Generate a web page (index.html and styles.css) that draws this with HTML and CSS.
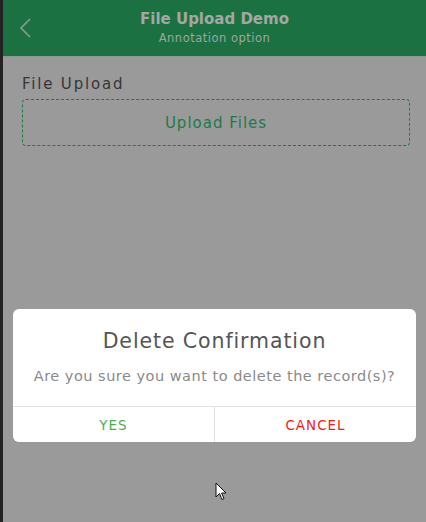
FILE: index.html
```html
<!DOCTYPE html>
<html>
<head>
<meta charset="utf-8">
<link rel="stylesheet" href="styles.css">
</head>
<body>
<div class="screen">
  <div class="strip"></div>
  <div class="app">
    <header class="topbar">
      <button class="back" aria-label="Back">
        <svg width="14" height="22" viewBox="0 0 14 22"><path d="M12 2 L3 11 L12 20" fill="none" stroke="#8f9c93" stroke-width="1.6"/></svg>
      </button>
      <div class="titles">
        <div class="title">File Upload Demo</div>
        <div class="subtitle">Annotation option</div>
      </div>
      <div class="spacer"></div>
    </header>
    <main class="content">
      <div class="label">File Upload</div>
      <div class="dropzone">Upload Files</div>
    </main>
  </div>
  <div class="dialog">
    <div class="dialog-body">
      <div class="dialog-title">Delete Confirmation</div>
      <div class="dialog-msg">Are you sure you want to delete the record(s)?</div>
    </div>
    <div class="dialog-actions">
      <button class="btn yes">YES</button>
      <button class="btn cancel">CANCEL</button>
    </div>
  </div>
  <svg class="cursor" width="13" height="20" viewBox="0 0 13 20"><path d="M1 1 L1 15 L4.5 11.5 L7 17.5 L9 16.6 L6.6 11 L11 11 Z" fill="#fff" stroke="#111" stroke-width="1"/></svg>
</div>
</body>
</html>
```
FILE: styles.css
```css
html, body {
  margin: 0;
  padding: 0;
  background: #9a9a9a;
}
.screen {
  position: relative;
  display: flex;
  width: 426px;
  height: 522px;
  font-family: "DejaVu Sans", sans-serif;
}
.strip {
  width: 3px;
  background: #232323;
  flex: none;
}
.app {
  flex: 1;
  display: flex;
  flex-direction: column;
}
.topbar {
  height: 57px;
  background: #1b7142;
  display: grid;
  grid-template-columns: 40px 1fr 40px;
  align-items: center;
  border-bottom: 1px solid #8a9a90;
  box-sizing: border-box;
}
.back {
  background: none;
  border: none;
  padding: 0;
  margin-left: 15px;
  display: flex;
  width: 14px;
}
.titles {
  text-align: center;
  margin-top: -2px;
}
.title {
  color: #a3a8a4;
  font-size: 15px;
  font-weight: bold;
  letter-spacing: 0;
  line-height: 20px;
}
.subtitle {
  color: #9ea7a1;
  font-size: 11.5px;
  letter-spacing: 0.5px;
  line-height: 14px;
  margin-top: 2px;
}
.content {
  padding: 18px 16px 0 19px;
}
.label {
  color: #363636;
  font-size: 15px;
  letter-spacing: 1.8px;
  line-height: 18px;
  margin-bottom: 6px;
}
.dropzone {
  height: 47px;
  box-sizing: border-box;
  border: 1px dashed #1d7a48;
  border-radius: 4px;
  display: flex;
  align-items: center;
  justify-content: center;
  color: #1d7a48;
  font-size: 15px;
  letter-spacing: 1px;
}
.dialog {
  position: absolute;
  left: 13px;
  top: 309px;
  width: 403px;
  height: 133px;
  background: #fff;
  border-radius: 6px;
  display: flex;
  flex-direction: column;
  overflow: hidden;
}
.dialog-body {
  flex: 1;
  display: flex;
  flex-direction: column;
  align-items: center;
  padding-top: 19px;
  border-bottom: 1px solid #e2e2e2;
}
.dialog-title {
  color: #555;
  font-size: 20.5px;
  letter-spacing: 0.9px;
  line-height: 26px;
}
.dialog-msg {
  color: #8a8a8a;
  font-size: 14.5px;
  letter-spacing: 0.5px;
  line-height: 20px;
  margin-top: 12px;
}
.dialog-actions {
  height: 35px;
  display: flex;
}
.btn {
  flex: 1;
  background: none;
  border: none;
  font-family: "DejaVu Sans", sans-serif;
  font-size: 13.5px;
  letter-spacing: 1px;
  padding: 0;
}
.yes {
  color: #4caf50;
  border-right: 1px solid #e2e2e2;
}
.cancel {
  color: #f01c1c;
}
.cursor {
  position: absolute;
  left: 215px;
  top: 482px;
}
```
